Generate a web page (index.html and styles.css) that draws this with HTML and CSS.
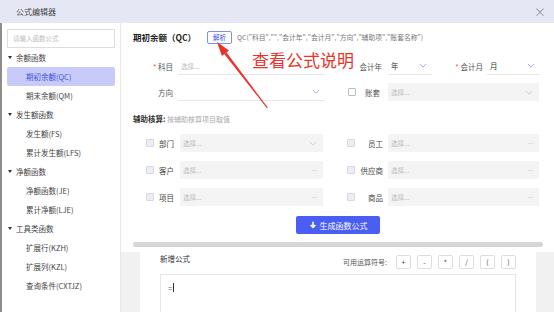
FILE: index.html
```html
<!DOCTYPE html>
<html lang="zh">

<head>
    <meta charset="UTF-8">
    <meta name="viewport" content="width=device-width, initial-scale=1.0">
    <title>公式编辑器</title>
    <link rel="stylesheet" href="styles.css">
</head>

<body>
    <div class="header">
        <span>公式编辑器</span>
        <span class="close">×</span>
    </div>
    <div class="wrap">
        <!-- LISTA DE FUNCIONES -->
        <div class="sidebar">
            <div class="search">请输入函数公式</div>
            <ul class="tree">
                <li class="group"><i class="caret"></i>余额函数</li>
                <li class="item active">期初余额(QC)</li>
                <li class="item">期末余额(QM)</li>
                <li class="group"><i class="caret"></i>发生额函数</li>
                <li class="item">发生额(FS)</li>
                <li class="item">累计发生额(LFS)</li>
                <li class="group"><i class="caret"></i>净额函数</li>
                <li class="item">净额函数(JE)</li>
                <li class="item">累计净额(LJE)</li>
                <li class="group"><i class="caret"></i>工具类函数</li>
                <li class="item">扩展行(KZH)</li>
                <li class="item">扩展列(KZL)</li>
                <li class="item">查询条件(CXTJZ)</li>
            </ul>
        </div>

        <div class="main">
            <div class="top">
                <div class="titleRow">
                    <span class="title">期初余额（QC）</span>
                    <span class="badge">解析</span>
                    <span class="formula">QC("科目","","会计年","会计月","方向","辅助项","账套名称")</span>
                </div>

                <div class="formRow first">
                    <span class="lbl"><i class="req">*</i>科目</span>
                    <div class="lineInput wide"><span class="ph">选择...</span></div>
                    <span class="lbl2">会计年</span>
                    <div class="lineInput year"><span>年</span>
                        <svg class="chev" viewBox="0 0 10 6"><path d="M1 1l4 4 4-4" /></svg>
                    </div>
                    <span class="lbl3"><i class="req">*</i> 会计月</span>
                    <div class="lineInput month"><span>月</span>
                        <svg class="chev" viewBox="0 0 10 6"><path d="M1 1l4 4 4-4" /></svg>
                    </div>
                </div>

                <div class="formRow second">
                    <span class="lbl">方向</span>
                    <div class="lineInput wide"><span></span>
                        <svg class="chev" viewBox="0 0 10 6"><path d="M1 1l4 4 4-4" /></svg>
                    </div>
                    <span class="check white"></span>
                    <span class="lbl4">账套</span>
                    <div class="fill big"><span class="ph">选择...</span>
                        <svg class="chev grey" viewBox="0 0 10 6"><path d="M1 1l4 4 4-4" /></svg>
                    </div>
                </div>

                <div class="auxTitle"><b>辅助核算:</b> 按辅助核算项目取值</div>

                <div class="auxGrid">
                    <div class="auxCell">
                        <span class="check"></span><span class="auxLbl">部门</span>
                        <div class="fill small"><span class="ph">选择...</span>
                            <svg class="chev grey" viewBox="0 0 10 6"><path d="M1 1l4 4 4-4" /></svg>
                        </div>
                    </div>
                    <div class="auxCell right">
                        <span class="check"></span><span class="auxLbl">员工</span>
                        <div class="fill big"><span class="ph">选择...</span><span class="dots">···</span></div>
                    </div>
                    <div class="auxCell">
                        <span class="check"></span><span class="auxLbl">客户</span>
                        <div class="fill small"><span class="ph">选择...</span><span class="dots">···</span></div>
                    </div>
                    <div class="auxCell right">
                        <span class="check"></span><span class="auxLbl">供应商</span>
                        <div class="fill big"><span class="ph">选择...</span><span class="dots">···</span></div>
                    </div>
                    <div class="auxCell">
                        <span class="check"></span><span class="auxLbl">项目</span>
                        <div class="fill small"><span class="ph">选择...</span><span class="dots">···</span></div>
                    </div>
                    <div class="auxCell right">
                        <span class="check"></span><span class="auxLbl">商品</span>
                        <div class="fill big"><span class="ph">选择...</span><span class="dots">···</span></div>
                    </div>
                </div>

                <div class="btnRow">
                    <button class="genBtn">
                        <svg viewBox="0 0 10 10"><path d="M5 1v6M2 5l3 3 3-3" /></svg>
                        生成函数公式
                    </button>
                </div>
            </div>

            <div class="hbar"></div>

            <div class="bottom">
                <div class="card">
                    <div class="cardHead">
                        <span class="cardTitle">新增公式</span>
                        <div class="ops">
                            <span class="opsLbl">可用运算符号:</span>
                            <span class="op">+</span>
                            <span class="op">-</span>
                            <span class="op">*</span>
                            <span class="op">/</span>
                            <span class="op">(</span>
                            <span class="op">)</span>
                        </div>
                    </div>
                    <div class="editor">=<span class="cursor"></span></div>
                </div>
            </div>

            <!-- ANOTACION ROJA -->
            <svg class="arrow" width="62" height="75" viewBox="0 0 62 75">
                <polygon points="6,4 18,12.4 10.9,17.9" />
                <polygon points="15.4,14.2 13.2,15.9 56,70.2 56.8,69.6" />
            </svg>
            <div class="note">查看公式说明</div>
        </div>
    </div>
</body>

</html>
```

FILE: styles.css
```css
* {
    box-sizing: border-box;
}

body {
    margin: 0px;
    padding: 0px;
    width: 554px;
    height: 312px;
    overflow: hidden;
    background-color: white;
    font-family: "Noto Sans CJK SC", "Noto Sans", sans-serif;
    color: #333;
}

/* CABECERA */
.header {
    height: 23px;
    background-color: #e6e7f4;
    display: flex;
    align-items: center;
    justify-content: space-between;
    padding: 0 8px 0 16px;
    font-size: 8px;
    color: #444;
}

.close {
    font-size: 12px;
    color: #999;
    line-height: 12px;
}

.wrap {
    display: flex;
    height: 289px;
    overflow: hidden;
    border-left: 2px solid #8d8d8d;
}

/* BARRA LATERAL */
.sidebar {
    width: 119px;
    border-right: 1px solid #e8e8e8;
    padding: 6px 5px 0 5px;
}

.search {
    height: 19px;
    width: 108px;
    border: 1px solid #dedede;
    font-size: 6.5px;
    line-height: 17px;
    color: #bbb;
    padding-left: 5px;
}

.tree {
    list-style: none;
    margin: 0;
    padding: 0;
}

.tree li {
    height: 19px;
    line-height: 19px;
    font-size: 7.5px;
    color: #444;
    white-space: nowrap;
}

.group {
    display: flex;
    align-items: center;
}

.caret {
    width: 0;
    height: 0;
    margin-left: 1px;
    margin-right: 4px;
    border-left: 2px solid transparent;
    border-right: 2px solid transparent;
    border-top: 3px solid #333;
}

.item {
    padding-left: 19px;
    border-radius: 2px;
}

.item.active {
    background-color: #c8cbf9;
    color: #3e50dc;
}

/* CONTENIDO PRINCIPAL */
.main {
    flex: 1;
    position: relative;
    display: flex;
    flex-direction: column;
    min-height: 0;
}

.top {
    padding: 7px 11px 0 12px;
}

.titleRow {
    height: 14px;
    display: flex;
    align-items: center;
    white-space: nowrap;
}

.title {
    width: 74px;
    font-size: 8.5px;
    font-weight: bold;
    color: #222;
}

.badge {
    height: 13px;
    width: 25px;
    border: 1px solid #8190e6;
    border-radius: 2px;
    color: #3e50dc;
    font-size: 6.5px;
    line-height: 11px;
    text-align: center;
}

.formula {
    margin-left: 5px;
    font-size: 6.8px;
    color: #777;
}

.formRow {
    display: flex;
    align-items: center;
    height: 18px;
    font-size: 7.5px;
    white-space: nowrap;
}

.formRow.first {
    margin-top: 13px;
}

.formRow.second {
    margin-top: 8px;
}

.req {
    font-style: normal;
    color: #f0453c;
    display: inline-block;
    width: 5px;
    margin-left: -5px;
}

.lbl {
    width: 45px;
    padding-left: 25px;
    color: #555;
}

.lbl2 {
    width: 63px;
    padding-right: 6px;
    text-align: right;
    color: #555;
}

.lbl3 {
    width: 55px;
    padding-right: 4px;
    text-align: right;
    color: #555;
}

.lbl4 {
    margin-left: 9px;
    width: 23px;
    color: #555;
}

.lineInput {
    height: 18px;
    border-bottom: 1px solid #e8e8e8;
    display: flex;
    align-items: center;
    justify-content: space-between;
    padding: 0 5px 0 3px;
    color: #333;
}

.lineInput.wide {
    width: 147px;
}

.lineInput.year {
    width: 44px;
}

.lineInput.month {
    width: 53px;
}

.ph {
    color: #bdbdbd;
    font-size: 6.5px;
}

.chev {
    width: 8px;
    height: 5px;
    fill: none;
    stroke: #8c94e4;
    stroke-width: 1;
}

.chev.grey {
    stroke: #c4c4c4;
}

.check {
    width: 8px;
    height: 8px;
    border: 1px solid #d5d8e2;
    background-color: #eceef4;
    border-radius: 1px;
    flex-shrink: 0;
}

.check.white {
    margin-left: 23px;
    background-color: white;
    border-color: #bdbdbd;
}

.fill {
    height: 18px;
    background-color: #f4f4f4;
    display: flex;
    align-items: center;
    justify-content: space-between;
    padding: 0 6px 0 3px;
}

.fill.big {
    width: 151px;
}

.fill.small {
    width: 143px;
}

.dots {
    font-family: "Liberation Sans", sans-serif;
    color: #bcbcbc;
    font-size: 7px;
    letter-spacing: -0.5px;
}

/* AUXILIARES */
.auxTitle {
    margin-top: 12px;
    height: 12px;
    line-height: 12px;
    font-size: 7px;
    color: #aaa;
}

.auxTitle b {
    color: #333;
    font-size: 7.5px;
}

.auxGrid {
    margin-top: 9px;
    display: grid;
    grid-template-columns: 192px 1fr;
    row-gap: 9px;
}

.auxCell {
    display: flex;
    align-items: center;
    height: 18px;
    font-size: 7.5px;
    color: #444;
    white-space: nowrap;
}

.auxCell .check {
    margin-left: 13px;
}

.auxLbl {
    width: 26px;
    padding-left: 5px;
}

.auxCell.right .check {
    margin-left: 22px;
}

.auxCell.right .auxLbl {
    width: 33px;
    padding-left: 0;
    padding-right: 5px;
    text-align: right;
}

.btnRow {
    margin-top: 10px;
    display: flex;
    justify-content: center;
}

.genBtn {
    width: 84px;
    height: 18px;
    border: none;
    border-radius: 2px;
    background-color: #4b5ef3;
    color: white;
    font-family: inherit;
    font-size: 8px;
    display: flex;
    align-items: center;
    justify-content: center;
    gap: 3px;
    padding: 0;
}

.genBtn svg {
    width: 8px;
    height: 8px;
    fill: none;
    stroke: white;
    stroke-width: 2;
}

.hbar {
    margin: 8px 11px 0 12px;
    height: 5px;
    border-radius: 3px;
    background-color: #d6d6d6;
}

/* PARTE INFERIOR */
.bottom {
    flex: 1;
    min-height: 0;
    overflow: hidden;
    margin-top: 5px;
    background-color: #f1f1f1;
    padding: 0 18px 0 19px;
}

.card {
    height: 100%;
    background-color: white;
    padding: 3px 20px 0 20px;
    display: flex;
    flex-direction: column;
}

.cardHead {
    display: flex;
    justify-content: space-between;
    height: 14px;
}

.cardTitle {
    font-size: 7.5px;
    line-height: 8px;
    color: #333;
}

.ops {
    display: flex;
    align-items: center;
    gap: 6px;
}

.opsLbl {
    font-size: 7px;
    color: #555;
    margin-right: 3px;
}

.op {
    width: 15px;
    height: 14px;
    border: 1px solid #ddd;
    border-radius: 2px;
    font-size: 7px;
    line-height: 12px;
    text-align: center;
    color: #444;
}

.editor {
    margin-top: 5px;
    flex: 1;
    border: 1px solid #e4e4e4;
    border-bottom: none;
    padding: 7px 0 0 7px;
    font-size: 8px;
    color: #666;
    display: flex;
    align-items: flex-start;
}

.cursor {
    display: inline-block;
    width: 1px;
    height: 9px;
    margin-top: 1px;
    margin-left: 1px;
    background-color: #333;
}

/* ANOTACION */
.arrow {
    position: absolute;
    left: 90px;
    top: 15px;
    fill: #e8332a;
}

.note {
    position: absolute;
    left: 131px;
    top: 28px;
    font-size: 17px;
    line-height: 17px;
    color: #e8332a;
    white-space: nowrap;
}
```
